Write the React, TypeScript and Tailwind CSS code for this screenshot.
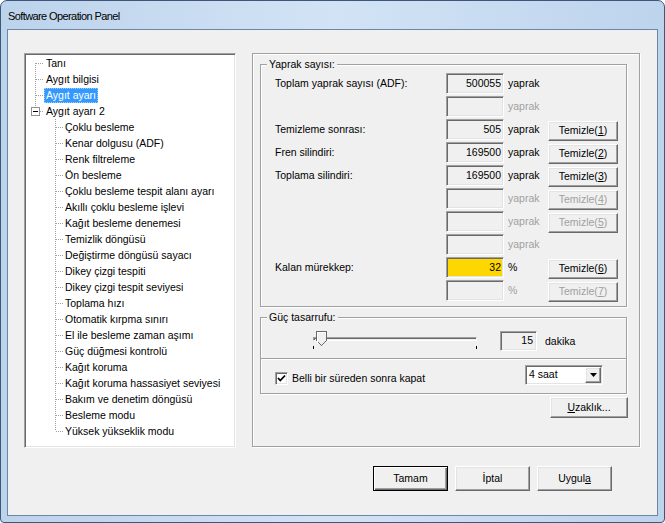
import React from 'react'

// classic win32 3D borders
const sunken =
  'border border-t-[#a0a0a0] border-l-[#a0a0a0] border-r-white border-b-white shadow-[inset_1px_1px_0_#696969,inset_-1px_-1px_0_#e3e3e3]'
const raised =
  'border border-t-white border-l-white border-r-[#696969] border-b-[#696969] bg-[#f0f0f0] shadow-[inset_-1px_-1px_0_#a0a0a0,inset_1px_1px_0_#e3e3e3]'
const etched = 'border border-[#a0a0a0] shadow-[inset_1px_1px_0_#fff,1px_1px_0_#fff]'

const children = [
  'Çoklu besleme',
  'Kenar dolgusu (ADF)',
  'Renk filtreleme',
  'Ön besleme',
  'Çoklu besleme tespit alanı ayarı',
  'Akıllı çoklu besleme işlevi',
  'Kağıt besleme denemesi',
  'Temizlik döngüsü',
  'Değiştirme döngüsü sayacı',
  'Dikey çizgi tespiti',
  'Dikey çizgi tespit seviyesi',
  'Toplama hızı',
  'Otomatik kırpma sınırı',
  'El ile besleme zaman aşımı',
  'Güç düğmesi kontrolü',
  'Kağıt koruma',
  'Kağıt koruma hassasiyet seviyesi',
  'Bakım ve denetim döngüsü',
  'Besleme modu',
  'Yüksek yükseklik modu',
]

const dot = { stroke: '#a0a0a0', strokeDasharray: '1 1', shapeRendering: 'crispEdges' as const }

function RootGutter({ kind }: { kind: 'first' | 'mid' | 'last' }) {
  return (
    <svg width="19" height="16" className="shrink-0">
      {kind === 'first' && <line x1="10.5" y1="8" x2="10.5" y2="16" {...dot} />}
      {kind === 'mid' && <line x1="10.5" y1="0" x2="10.5" y2="16" {...dot} />}
      {kind === 'last' ? (
        <>
          <line x1="10.5" y1="0" x2="10.5" y2="4" {...dot} />
          <rect x="6.5" y="4.5" width="8" height="8" fill="#fff" stroke="#919191" shapeRendering="crispEdges" />
          <line x1="8" y1="8.5" x2="13" y2="8.5" stroke="#000" shapeRendering="crispEdges" />
          <line x1="15" y1="8.5" x2="19" y2="8.5" {...dot} />
        </>
      ) : (
        <line x1="11" y1="8.5" x2="19" y2="8.5" {...dot} />
      )}
    </svg>
  )
}

function ChildGutter({ last }: { last: boolean }) {
  return (
    <svg width="38" height="16" className="shrink-0">
      <line x1="30.5" y1="0" x2="30.5" y2={last ? 8 : 16} {...dot} />
      <line x1="31" y1="8.5" x2="38" y2="8.5" {...dot} />
    </svg>
  )
}

function TreeRow({ gutter, label, selected }: { gutter: React.ReactNode; label: string; selected?: boolean }) {
  return (
    <div className="flex h-[16px] items-center">
      {gutter}
      <span
        className={
          selected
            ? 'h-[15px] px-[2px] leading-[15px] whitespace-nowrap bg-[#3399ff] text-white outline outline-1 outline-dotted outline-[#99ccff] -outline-offset-1'
            : 'h-[15px] px-[2px] leading-[15px] whitespace-nowrap'
        }
      >
        {label}
      </span>
    </div>
  )
}

function Tree() {
  return (
    <div className={`w-[212px] h-[395px] bg-white pt-[1px] overflow-hidden ${sunken}`}>
      <TreeRow gutter={<RootGutter kind="first" />} label="Tanı" />
      <TreeRow gutter={<RootGutter kind="mid" />} label="Aygıt bilgisi" />
      <TreeRow gutter={<RootGutter kind="mid" />} label="Aygıt ayarı" selected />
      <TreeRow gutter={<RootGutter kind="last" />} label="Aygıt ayarı 2" />
      {children.map((c, i) => (
        <TreeRow key={c} gutter={<ChildGutter last={i === children.length - 1} />} label={c} />
      ))}
    </div>
  )
}

function Btn({ n, disabled }: { n: number; disabled?: boolean }) {
  return (
    <div
      className={`w-[70px] h-[20px] mt-[2px] flex items-center justify-center ${raised} ${
        disabled ? 'text-[#a0a0a0]' : 'text-black'
      }`}
    >
      Temizle(<span className="underline underline-offset-1">{n}</span>)
    </div>
  )
}

type Row = { label?: string; value?: string; unit: string; on: boolean; btn?: number; btnOff?: boolean; yellow?: boolean }

const rows: Row[] = [
  { label: 'Toplam yaprak sayısı (ADF):', value: '500055', unit: 'yaprak', on: true },
  { unit: 'yaprak', on: false },
  { label: 'Temizleme sonrası:', value: '505', unit: 'yaprak', on: true, btn: 1 },
  { label: 'Fren silindiri:', value: '169500', unit: 'yaprak', on: true, btn: 2 },
  { label: 'Toplama silindiri:', value: '169500', unit: 'yaprak', on: true, btn: 3 },
  { unit: 'yaprak', on: false, btn: 4, btnOff: true },
  { unit: 'yaprak', on: false, btn: 5, btnOff: true },
  { unit: 'yaprak', on: false },
  { label: 'Kalan mürekkep:', value: '32', unit: '%', on: true, btn: 6, yellow: true },
  { unit: '%', on: false, btn: 7, btnOff: true },
]

function Legend({ children }: { children: React.ReactNode }) {
  return <div className="-mt-[7px] ml-[6px] w-fit px-[2px] leading-[13px] bg-[#f0f0f0]">{children}</div>
}

function RightPanel() {
  return (
    <div className={`w-[388px] h-[394px] pt-[10px] pl-[7px] pr-[12px] flex flex-col ${etched}`}>
      {/* Yaprak sayısı */}
      <div className={`pb-[4px] ${etched}`}>
        <Legend>Yaprak sayısı:</Legend>
        <div className="mt-[1px]">
          {rows.map((r, i) => (
            <div key={i} className="flex h-[23px] items-center pl-[14px]">
              <div className="w-[171px] whitespace-nowrap">{r.label}</div>
              <div
                className={`w-[58px] h-[21px] flex items-center justify-end pr-[2px] ${sunken} ${
                  r.yellow ? 'bg-[#ffd700]' : 'bg-[#f0f0f0]'
                }`}
              >
                {r.value}
              </div>
              <div className={`w-[44px] pl-[4px] ${r.on ? 'text-black' : 'text-[#a0a0a0]'}`}>{r.unit}</div>
              {r.btn ? <Btn n={r.btn} disabled={r.btnOff} /> : null}
            </div>
          ))}
        </div>
      </div>

      {/* Güç tasarrufu */}
      <div className={`mt-[10px] ${etched}`}>
        <Legend>Güç tasarrufu:</Legend>
        <div className="flex h-[34px] items-start">
          <div className="relative ml-[51px] mt-[6px] w-[168px] h-[26px]">
            <div className="absolute left-[1px] top-[7px] w-[164px] h-[4px] border border-t-[#a0a0a0] border-l-[#a0a0a0] border-r-white border-b-white shadow-[inset_1px_1px_0_#696969]" />
            <svg width="11" height="15" className="absolute left-[4px] top-[1px]">
              <path d="M0.5 0.5 H10.5 V9.5 L5.5 14.5 L0.5 9.5 Z" fill="#f0f0f0" stroke="#696969" shapeRendering="crispEdges" />
              <path d="M1.5 13 V1.5 H9.5" fill="none" stroke="#fff" shapeRendering="crispEdges" />
            </svg>
            <div className="absolute left-[1px] top-[16px] w-[1px] h-[3px] bg-black" />
            <div className="absolute left-[164px] top-[16px] w-[1px] h-[3px] bg-black" />
          </div>
          <div className={`ml-[20px] mt-[7px] w-[37px] h-[20px] flex items-center justify-end pr-[3px] bg-[#f0f0f0] ${sunken}`}>
            15
          </div>
          <div className="ml-[8px] mt-[7px] h-[20px] leading-[20px]">dakika</div>
        </div>
        <div className="border-t border-[#a0a0a0] shadow-[inset_0_1px_0_#fff] pt-[6px] pb-[8px] flex items-end pl-[14px] pr-[23px]">
          <div className={`w-[13px] h-[13px] bg-white flex items-center justify-center ${sunken}`}>
            <svg width="9" height="9" viewBox="0 0 9 9">
              <polyline points="1,4 3.3,6.5 8,1.5" fill="none" stroke="#000" strokeWidth="1.8" />
            </svg>
          </div>
          <div className="ml-[4px] leading-[13px]">Belli bir süreden sonra kapat</div>
          <div className={`ml-auto w-[78px] h-[20px] bg-white flex items-center ${sunken}`}>
            <span className="flex-1 pl-[3px]">4 saat</span>
            <div className={`w-[16px] h-[16px] mr-[1px] flex items-center justify-center ${raised}`}>
              <svg width="7" height="4">
                <path d="M0 0 H7 L3.5 4 Z" fill="#000" />
              </svg>
            </div>
          </div>
        </div>
      </div>

      <div className={`mt-[3px] ml-auto -mr-[1px] w-[78px] h-[21px] flex items-center justify-center ${raised}`}>
        <span>
          <span className="underline underline-offset-1">U</span>zaklık...
        </span>
      </div>
    </div>
  )
}

function DlgButton({ children, def }: { children: React.ReactNode; def?: boolean }) {
  return (
    <div
      className={
        def
          ? 'w-[75px] h-[25px] flex items-center justify-center bg-[#f0f0f0] border border-black shadow-[inset_1px_1px_0_#fff,inset_-1px_-1px_0_#696969,inset_-2px_-2px_0_#a0a0a0]'
          : `w-[75px] h-[25px] flex items-center justify-center ${raised}`
      }
    >
      {children}
    </div>
  )
}

export default function App() {
  return (
    <div className="w-[665px] h-[523px] flex flex-col border border-[#3d5679] rounded-t-[7px] rounded-b-[4px] bg-linear-to-r from-[#bcd3ec] via-[#d2e3f5] to-[#bdd4ed] px-[6px] pb-[6px] font-['Liberation_Sans',Arial,sans-serif] text-[10.5px] text-black">
      <div className="h-[28px] flex items-center pl-[1px] pt-[2px] text-[11px] tracking-[-0.6px]">
        Software Operation Panel
      </div>
      <div className="flex-1 flex flex-col border border-[#6d86a3] bg-[#f0f0f0] pt-[23px] pl-[16px]">
        <div className="flex gap-[16px]">
          <Tree />
          <RightPanel />
        </div>
        <div className="mt-[18px] flex justify-end gap-[7px] pr-[45px]">
          <DlgButton def>Tamam</DlgButton>
          <DlgButton>İptal</DlgButton>
          <DlgButton>
            <span>
              Uygul<span className="underline underline-offset-1">a</span>
            </span>
          </DlgButton>
        </div>
      </div>
    </div>
  )
}
